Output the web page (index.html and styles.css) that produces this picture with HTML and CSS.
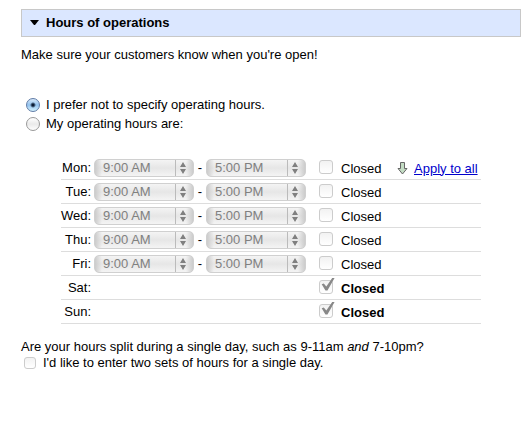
FILE: index.html
```html
<!DOCTYPE html>
<html lang="en">

<head>
    <meta charset="UTF-8">
    <meta name="viewport" content="width=device-width, initial-scale=1.0">
    <title>Hours of operations</title>
    <link rel="stylesheet" href="styles.css">
</head>

<body>
    <main>
        <h2 class="section-title">
            <svg class="toggle" width="9" height="6" viewBox="0 0 9 6" aria-hidden="true">
                <path d="M0 0h9L5 5H4z" fill="#000" />
            </svg>
            Hours of operations
        </h2>
        <p class="intro">Make sure your customers know when you're open!</p>

        <form class="hours-form">
            <div class="choice">
                <input type="radio" name="hours" id="HoursNone" checked>
                <label for="HoursNone">I prefer not to specify operating hours.</label>
            </div>
            <div class="choice">
                <input type="radio" name="hours" id="HoursSet">
                <label for="HoursSet">My operating hours are:</label>
            </div>

            <table class="hours">
                <tbody>
                    <tr>
                        <th scope="row">Mon:</th>
                        <td class="times">
                            <select aria-label="Monday opens" disabled><option>9:00 AM</option></select>
                            <span>-</span>
                            <select aria-label="Monday closes" disabled><option>5:00 PM</option></select>
                        </td>
                        <td class="tick"><input type="checkbox" id="MonClosed" disabled></td>
                        <td class="closed"><label for="MonClosed">Closed</label></td>
                        <td class="apply">
                            <div class="apply-all">
                                <svg width="11" height="13" viewBox="0 0 11 13" aria-hidden="true">
                                    <path d="M3.5 .5h4v6H10L5.5 12 1 6.500h2.500z" fill="#c3dcc3" stroke="#666" />
                                </svg>
                                <a href="#">Apply to all</a>
                            </div>
                        </td>
                    </tr>
                    <tr>
                        <th scope="row">Tue:</th>
                        <td class="times">
                            <select aria-label="Tuesday opens" disabled><option>9:00 AM</option></select>
                            <span>-</span>
                            <select aria-label="Tuesday closes" disabled><option>5:00 PM</option></select>
                        </td>
                        <td class="tick"><input type="checkbox" id="TueClosed" disabled></td>
                        <td class="closed"><label for="TueClosed">Closed</label></td>
                        <td></td>
                    </tr>
                    <tr>
                        <th scope="row">Wed:</th>
                        <td class="times">
                            <select aria-label="Wednesday opens" disabled><option>9:00 AM</option></select>
                            <span>-</span>
                            <select aria-label="Wednesday closes" disabled><option>5:00 PM</option></select>
                        </td>
                        <td class="tick"><input type="checkbox" id="WedClosed" disabled></td>
                        <td class="closed"><label for="WedClosed">Closed</label></td>
                        <td></td>
                    </tr>
                    <tr>
                        <th scope="row">Thu:</th>
                        <td class="times">
                            <select aria-label="Thursday opens" disabled><option>9:00 AM</option></select>
                            <span>-</span>
                            <select aria-label="Thursday closes" disabled><option>5:00 PM</option></select>
                        </td>
                        <td class="tick"><input type="checkbox" id="ThuClosed" disabled></td>
                        <td class="closed"><label for="ThuClosed">Closed</label></td>
                        <td></td>
                    </tr>
                    <tr>
                        <th scope="row">Fri:</th>
                        <td class="times">
                            <select aria-label="Friday opens" disabled><option>9:00 AM</option></select>
                            <span>-</span>
                            <select aria-label="Friday closes" disabled><option>5:00 PM</option></select>
                        </td>
                        <td class="tick"><input type="checkbox" id="FriClosed" disabled></td>
                        <td class="closed"><label for="FriClosed">Closed</label></td>
                        <td></td>
                    </tr>
                    <tr class="is-closed">
                        <th scope="row">Sat:</th>
                        <td class="times"></td>
                        <td class="tick"><input type="checkbox" id="SatClosed" checked disabled></td>
                        <td class="closed"><label for="SatClosed">Closed</label></td>
                        <td></td>
                    </tr>
                    <tr class="is-closed">
                        <th scope="row">Sun:</th>
                        <td class="times"></td>
                        <td class="tick"><input type="checkbox" id="SunClosed" checked disabled></td>
                        <td class="closed"><label for="SunClosed">Closed</label></td>
                        <td></td>
                    </tr>
                </tbody>
            </table>

            <p class="split-question">Are your hours split during a single day, such as 9-11am <em>and</em> 7-10pm?</p>
            <div class="split">
                <input type="checkbox" id="SplitHours">
                <label for="SplitHours">I'd like to enter two sets of hours for a single day.</label>
            </div>
        </form>
    </main>
</body>

</html>
```

FILE: styles.css
```css
* {
    box-sizing: border-box;
    margin: 0;
    padding: 0;
}

body {
    padding: 9px 8px 20px 21px;
    background-color: #fff;
    color: #000;
    font: 13px/16px "Liberation Sans", Arial, sans-serif;
}

.section-title {
    display: flex;
    align-items: center;
    gap: 7px;
    height: 28px;
    padding: 0 8px;
    border: 1px solid #c8c8c8;
    background-color: #dbe7ff;
    font-size: 13px;
}

.intro {
    margin-top: 10px;
}

.hours-form {
    margin-top: 32px;
}

.choice {
    display: flex;
    align-items: center;
    gap: 6px;
    height: 19px;
    padding-left: 5px;
}

input {
    appearance: none;
    flex: none;
    display: block;
    width: 14px;
    height: 14px;
    border: 1px solid #ccc;
    border-radius: 3px;
    background: linear-gradient(#f2f2f2, #fff);
}

input[type="radio"] {
    border-color: #999;
    border-radius: 50%;
    background: linear-gradient(#fff, #eaeaea 50%, #fff);
}

input[type="radio"]:checked {
    border-color: #5f7ba6;
    background:
        radial-gradient(circle, #0c1c33 1px, transparent 3px),
        linear-gradient(#d8e9fa, #93c2ee 50%, #d5f3ff);
}

input[type="checkbox"]:checked {
    position: relative;
}

/* tick mark sticks out over the top of the box */
input[type="checkbox"]:checked::before {
    content: "";
    position: absolute;
    top: -3px;
    left: 1px;
    width: 14px;
    height: 14px;
    background: #888;
    clip-path: polygon(5% 48%, 20% 42%, 38% 64%, 80% 3%, 97% 3%, 46% 92%, 32% 92%);
}

.hours {
    width: 420px;
    max-width: 100%;
    margin: 23px 0 0 40px;
    border-collapse: separate;
    border-spacing: 0;
    table-layout: fixed;
}

.hours th,
.hours td {
    height: 24px;
    border-bottom: 1px solid #ddd;
    vertical-align: middle;
    white-space: nowrap;
}

.hours th {
    width: 33px;
    padding-right: 3px;
    font-weight: normal;
    text-align: right;
}

.hours .times {
    width: 225px;
}

.hours .tick {
    width: 22px;
    padding-bottom: 2px;
}

.hours .closed {
    width: 56px;
    padding-top: 2px;
}

.hours .apply {
    padding-top: 2px;
}

.is-closed .closed {
    font-weight: bold;
}

.times select {
    appearance: none;
    float: left;
    width: 100px;
    height: 18px;
    padding-left: 8px;
    border: 1px solid #d0d0d0;
    border-radius: 5px;
    background:
        url("data:image/svg+xml,%3Csvg xmlns='http://www.w3.org/2000/svg' width='18' height='16'%3E%3Cpath d='M.5 0v16' stroke='%23bbb'/%3E%3Cpath d='M5 7l3-5 3 5zM5 9h6l-3 5z' fill='%23808080'/%3E%3C/svg%3E") right center no-repeat,
        linear-gradient(to right, #ccc, transparent 7px, transparent 91px, #ccc),
        linear-gradient(#f4f4f4, #e6e6e6 50%, #f4f4f4);
    color: #808080;
    font: 13px/16px "Liberation Sans", Arial, sans-serif;
    opacity: 1;
}

.times span {
    float: left;
    width: 12px;
    line-height: 18px;
    text-align: center;
}

.apply-all {
    display: flex;
    align-items: center;
    gap: 6px;
}

a {
    color: #00c;
}

.split-question {
    margin-top: 15px;
}

.split {
    display: flex;
    align-items: center;
    gap: 7px;
    padding-left: 3px;
}

.split input {
    width: 12px;
    height: 12px;
}
```
